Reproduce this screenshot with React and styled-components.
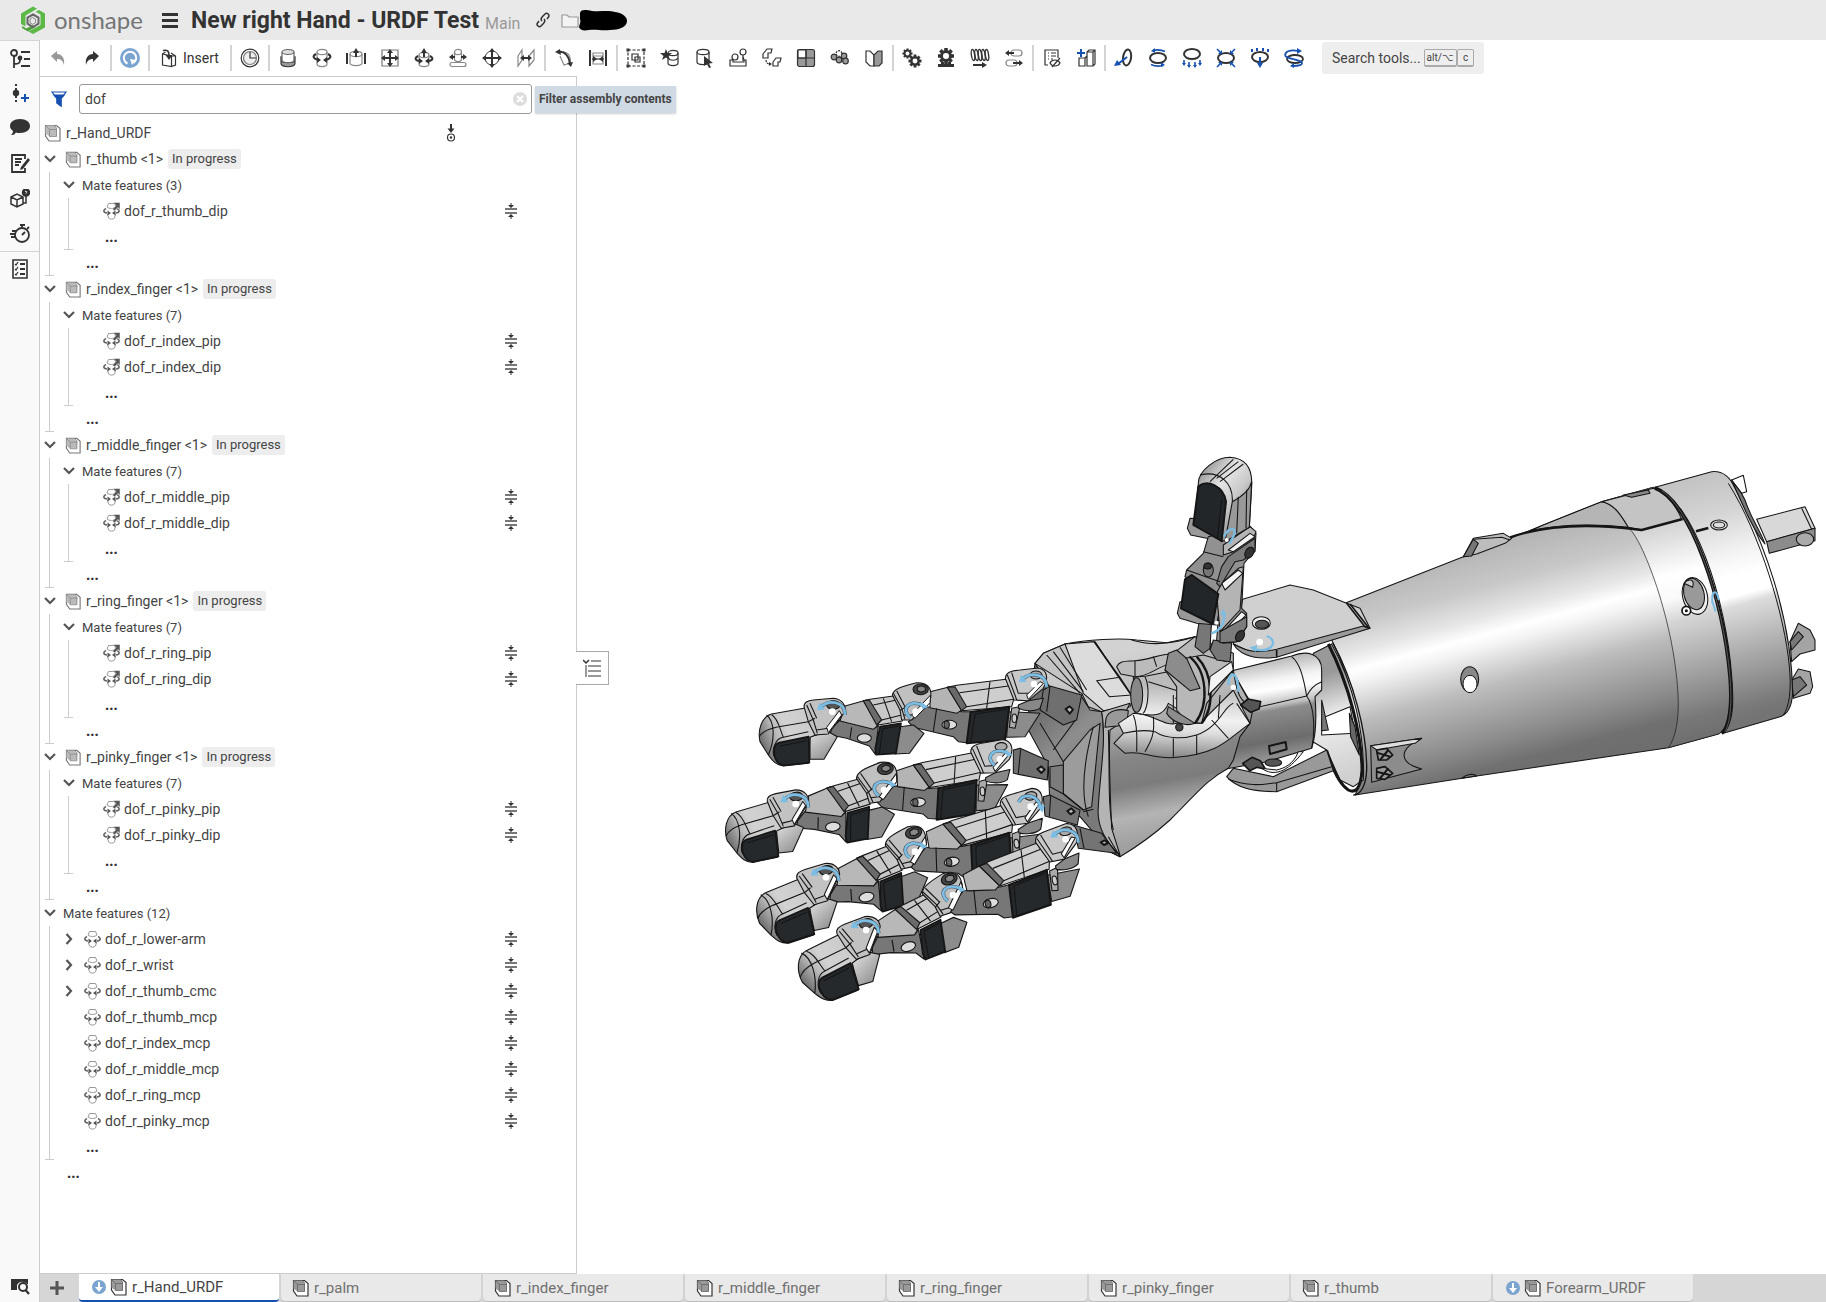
import React from "react";
import styled, { createGlobalStyle, css } from "styled-components";

const INK = "#333";
const BLUE = "#1651b0";
const SOFT = "#7ba4d0";

const GlobalStyle = createGlobalStyle`
  * { box-sizing: border-box; }
  html, body, #root { height: 100%; }
  body { margin: 0; background: #fff; }
  body, button, input { font-family: Roboto, "Liberation Sans", sans-serif; color: #444; }
  button { border: 0; padding: 0; background: none; cursor: pointer; }
  svg { display: block; flex: none; }
`;

/* ---------- layout ---------- */

const Shell = styled.div`
  display: flex;
  flex-direction: column;
  height: 100%;
  overflow: hidden;
`;

const Header = styled.header`
  display: flex;
  align-items: center;
  height: 40px;
  flex: none;
  padding-left: 20px;
  background: #e9e9e9;
`;

const Brand = styled.a`
  display: flex;
  align-items: center;
  gap: 8px;
  width: 142px;
  color: #757575;
  font: 400 24px/26px Lato, sans-serif;
  text-decoration: none;
`;

const MenuButton = styled.button`
  display: grid;
  width: 16px;
  margin-right: 13px;
  gap: 3px;
  span { height: 3px; background: ${INK}; }
`;

const Title = styled.h1`
  margin: 0 6px 0 0;
  padding-top: 2px;
  font-size: 23px;
  line-height: 28px;
  font-weight: 700;
  color: ${INK};
`;

const Branch = styled.span`
  padding-top: 6px;
  margin-right: 16px;
  font-size: 16px;
  color: #999;
`;

const HeaderIcon = styled.button`
  margin-right: ${(p) => p.$gap || 0}px;
`;

const Body = styled.div`
  display: flex;
  flex: 1;
  min-height: 0;
`;

const Rail = styled.nav`
  display: flex;
  flex-direction: column;
  align-items: center;
  width: 40px;
  flex: none;
  background: #f9f9f9;
  border-top: 1px solid #d4d4d4;
  border-right: 1px solid #ccc;
`;

const RailButton = styled.button`
  display: grid;
  place-items: center;
  width: 100%;
  height: 35px;
  ${(p) => p.$ruled && css`border-top: 1px solid #d4d4d4;`}
`;

const RailSpace = styled.div`
  flex: 1;
`;

const Column = styled.div`
  display: flex;
  flex-direction: column;
  flex: 1;
  min-width: 0;
`;

const Toolbar = styled.div`
  display: flex;
  align-items: center;
  height: 36px;
  flex: none;
  padding-left: 1px;
`;

const Tool = styled.button`
  display: flex;
  align-items: center;
  justify-content: center;
  gap: 4px;
  width: ${(p) => (p.$wide ? 78 : 34)}px;
  height: 34px;
  padding-right: ${(p) => (p.$wide ? 2 : 0)}px;
  font-size: 14px;
  color: ${INK};
`;

const Divider = styled.span`
  width: 2px;
  height: 26px;
  margin: 0 1px;
  background: #d4d4d4;
`;

const SearchTools = styled.button`
  display: flex;
  align-items: center;
  height: 32px;
  margin-left: 11px;
  padding: 0 10px;
  border-radius: 3px;
  background: #eee;
  font-size: 14px;
  color: #444;
  span { margin-right: 3px; }
`;

const Key = styled.kbd`
  height: 18px;
  padding: 0 ${(p) => p.$pad}px;
  border: 1px solid #aaa;
  border-bottom-width: 2px;
  border-radius: 2px;
  font: 10px/15px Roboto, sans-serif;
`;

const Work = styled.main`
  position: relative;
  display: flex;
  flex: 1;
  min-height: 0;
`;

const Panel = styled.section`
  width: 537px;
  flex: none;
  border: solid #ccc;
  border-width: 1px 1px 1px 0;
`;

const FilterRow = styled.form`
  display: flex;
  align-items: center;
  gap: 12px;
  height: 43px;
  padding: 0 44px 0 11px;
`;

const FilterField = styled.div`
  display: flex;
  align-items: center;
  flex: 1;
  height: 30px;
  padding: 0 4px 0 5px;
  border: 1px solid #999;
  border-radius: 3px;
`;

const FilterInput = styled.input`
  flex: 1;
  min-width: 0;
  padding: 0;
  border: 0;
  outline: 0;
  font-size: 14px;
  color: #444;
`;

const Tooltip = styled.div`
  position: absolute;
  left: 495px;
  top: 10px;
  height: 27px;
  padding: 0 4px;
  background: #d0dae5;
  box-shadow: 0 1px 2px rgba(0, 0, 0, 0.2);
  font-size: 12px;
  font-weight: 700;
  line-height: 26px;
`;

const Branches = styled.ul`
  list-style: none;
  margin: 0;
  padding: 0;
  ${(p) => p.$guided && css`
    position: relative;
    margin-left: 9px;
    padding-left: 9px;
    border-left: 1px solid #ccc;
    &::after {
      content: "";
      position: absolute;
      left: -5px;
      bottom: 0;
      width: 9px;
      height: 1px;
      background: #ccc;
    }
  `}
`;

const Row = styled.div`
  display: flex;
  align-items: center;
  height: 26px;
  padding: 0 59px 0 4px;
  font-size: ${(p) => (p.$folder ? 13 : 14)}px;
  white-space: nowrap;
`;

const RootRow = styled(Row)`
  gap: 4px;
  padding-right: 120px;
  & > :last-child { margin-left: auto; }
`;

const Chevron = styled.button`
  display: grid;
  place-items: center;
  width: 12px;
  height: 20px;
`;

const NodeBody = styled.span`
  display: flex;
  align-items: center;
  flex: 1;
  gap: 4px;
  margin-left: ${(p) => p.$inset}px;
`;

const Status = styled.span`
  height: 20px;
  margin-left: 1px;
  padding: 0 4px;
  border-radius: 3px;
  background: #ededed;
  font-size: 13px;
  line-height: 20px;
`;

const More = styled.button`
  height: 26px;
  margin-left: 23px;
  font-size: 14px;
  font-weight: 900;
  color: #333;
`;

const Viewport = styled.div`
  flex: 1;
  min-width: 0;
  svg { width: 100%; height: 100%; }
`;

const PanelToggle = styled.button`
  position: absolute;
  left: 536px;
  top: 48%;
  display: grid;
  place-items: center;
  width: 33px;
  height: 34px;
  border: 1px solid #aaa;
  border-left: 0;
  background: #fff;
`;

const TabBar = styled.nav`
  display: flex;
  height: 28px;
  flex: none;
  gap: 2px;
  background: #d6d6d6;
`;

const AddTab = styled.button`
  display: grid;
  place-items: center;
  width: 37px;
  padding-right: 4px;
`;

const Tab = styled.button`
  display: flex;
  align-items: center;
  gap: 4px;
  width: 200px;
  height: 27px;
  padding: 0 0 0 ${(p) => (p.$synced ? 13 : 11)}px;
  border-radius: 0 0 4px 4px;
  background: #e9e9e9;
  box-shadow: 0 1px 1px #bbb;
  font-size: 15px;
  color: #707070;
  ${(p) => p.$active && css`
    height: 28px;
    background: #fff;
    color: #444;
    border-bottom: 2px solid ${BLUE};
    box-shadow: none;
  `}
`;

/* ---------- small icons ---------- */

const Ico = ({ s = 20, w = s, box = "0 0 20 20", children, ...rest }) => (
  <svg width={w} height={s} viewBox={box} fill="none" stroke={INK} strokeWidth="1.2" aria-hidden="true" {...rest}>
    {children}
  </svg>
);

const Cyl = ({ x = 5, y = 2, w = 10, h = 16, c = "#888" }) => (
  <g stroke={c}>
    <ellipse cx={x + w / 2} cy={y + 3} rx={w / 2} ry="2.6" fill="#fff" />
    <path d={`M${x} ${y + 3}V${y + h - 3}c0 3.4 ${w} 3.4 ${w} 0V${y + 3}`} />
  </g>
);

const Ring = ({ d = 0 }) => <ellipse cx="10" cy={10 + d} rx="8" ry="5" stroke={INK} strokeWidth="2" />;

const gear = (cx, cy, r) => (
  <g stroke="none" fill={INK}>
    {[0, 45, 90, 135].map((a) => (
      <rect key={a} x={cx - r * 0.22} y={cy - r} width={r * 0.44} height={r * 2} transform={`rotate(${a} ${cx} ${cy})`} />
    ))}
    <circle cx={cx} cy={cy} r={r * 0.74} />
    <circle cx={cx} cy={cy} r={r * 0.38} fill="#fff" />
  </g>
);

const F = { fill: INK, stroke: "none" };
const B = { fill: BLUE, stroke: "none" };

const TOOLS = [
  ["Undo", <path fill="#999" stroke="none" d="M3 8l6-5v3c5 0 8 4 7 11-1-4-3-6-7-6v3z" />],
  ["Redo", <path {...F} d="M17 8l-6-5v3C6 6 3 10 4 17c1-4 3-6 7-6v3z" />],
  null,
  ["Update", <g stroke="none"><circle cx="10" cy="10" r="10" fill={SOFT} /><path d="M7.500 15.500A6.200 6.200 0 1 1 13.500 15" stroke="#fff" strokeWidth="2" fill="none" /><path d="M10 11l6 1-4 5z" fill="#fff" /></g>],
  null,
  ["Insert", <g><path d="M3.500 6v11l9 1.500V8zM12.500 8h4v9l-4 1.500M3.500 6l3-2M12 5l4.500 3" /><path d="M4 2.500c5-1 6 1 6 5" strokeWidth="1.600" /><path {...F} d="M6.500 7h7L10 12z" /></g>],
  null,
  ["History", <g><circle cx="10" cy="10" r="8.800" /><circle cx="10" cy="10" r="6.500" fill="#eee" stroke="#777" /><path d="M10 4v6h6" /></g>],
  null,
  ["Fastened mate", <g><path fill="#999" d="M3 9v6c0 5 14 5 14 0V9l-2 1v4H5v-4z" /><path d="M4 4v8c0 3.500 12 3.500 12 0V4" fill="#fff" stroke="#666" /><ellipse cx="10" cy="4" rx="6" ry="2.500" fill="#ddd" stroke="#666" /></g>],
  ["Revolute mate", <g><Cyl y={1} h={18} /><path d="M4 6c-4 2-3 5 3 6M16 6c4 2 3 5-3 6" strokeWidth="2" /><path {...F} d="M9 12l-4-3v6zM11 12l4-3v6z" /></g>],
  ["Slider mate", <g><Cyl x={4} w={12} y={3} h={15} /><path d="M1 5v11M19 5v11M10 9V3" strokeWidth="2" /><path {...F} d="M10 0L7 5h6z" /></g>],
  ["Planar mate", <g><path d="M2 2h16v16H2z" stroke="#777" /><path d="M10 3v14M3 10h14" strokeWidth="2" /><path {...F} d="M10 1l-3 4h6zM10 19l-3-4h6zM1 10l4-3v6zM19 10l-4-3v6z" /></g>],
  ["Cylindrical mate", <g><Cyl y={4} h={15} /><path d="M4 8c-4 2-3 5 3 5M16 8c4 2 3 5-3 5M10 9V4" strokeWidth="2" /><path {...F} d="M9 13l-4-3v6zM11 13l4-3v6zM10 0L7 5h6z" /></g>],
  ["Pin slot mate", <g><Cyl x={6.500} w={7} y={1} h={13} /><rect x="2" y="14.500" width="16" height="4" rx="2" stroke="#888" fill="#fff" /><path d="M4 9h3M16 9h-3" strokeWidth="2" /><path {...F} d="M1 9l4-3v6zM19 9l-4-3v6z" /></g>],
  ["Ball mate", <g><circle cx="10" cy="10" r="7" stroke="#777" /><path d="M10 1v18M1 10h18" strokeWidth="2" /><path {...F} d="M10 0L7 4h6zM10 20l-3-4h6zM0 10l4-3v6zM20 10l-4-3v6z" /></g>],
  ["Parallel mate", <g><path d="M2 8l4-6v10l-4 6zM13 8l5-6v10l-5 6z" stroke="#888" /><path d="M6 10h8" strokeWidth="2" /><path {...F} d="M4 10l4-3v6zM16 10l-4-3v6z" /></g>],
  null,
  ["Tangent mate", <g><path d="M6 8l4 9 6-2c1-6-1-11-7-11" stroke="#888" /><path d="M4 4c7-1 11 4 12 12" strokeWidth="2" /><path {...F} d="M1 4l5-3 1 6zM17 19l-4-4 6-1z" /></g>],
  ["Width mate", <g><path d="M2 2v16M18 2v16" strokeWidth="2" /><path d="M5 5h10v11H5zM5 8h10" stroke="#888" /><path d="M4 11h12" /><path {...F} d="M9 11l-4-3v6zM11 11l4-3v6z" /></g>],
  null,
  ["Group", <g><path d="M2 2h16v16H2z" strokeDasharray="3 1.500" /><path d="M6 6h6v6H6zM9 9h5v5H9z" /><path {...F} d="M.500.500h3v3h-3zM16.500.500h3v3h-3zM.500 16.500h3v3h-3zM16.500 16.500h3v3h-3z" /></g>],
  ["Mate connector", <g><Cyl x={8} w={10} y={2} c={INK} /><path d="M8 10c2 3 8 3 10 0" /><path {...F} d="M6 1l1.500 4H12l-3.500 3L10 12l-4-2.500L2 12l1.500-4L0 5h4.500z" /></g>],
  ["Replicate", <g><Cyl x={3} w={12} y={1} c={INK} /><path {...F} d="M10 8l9 7-4 .500 2 4-2 .500-2-4-3 2z" /></g>],
  ["Assembly pattern", <g><path d="M2 12h3v2h11v-2h2v6H2zM4 12l1-3M16 12l-1-3" /><circle cx="7" cy="9" r="3" fill="#fff" /><circle cx="15" cy="4" r="3" fill="#fff" /><path d="M15 7v6" /></g>],
  ["Linear pattern", <g><path d="M1 6l4-5h5l-1 4H6v5H1zM11 14l3-4h5l-1 4h-2v4h-5z" /><path d="M4 12c0 3 2 4 4 4" strokeDasharray="2 1" /><path {...F} d="M10 16l-3-2v4z" /></g>],
  ["Circular pattern", <g><rect x="1.500" y="1.500" width="17" height="17" rx="2" fill="#999" /><path d="M2 2h8v8H2z" fill="#fff" /><path d="M10 2v16M2 10h16" /></g>],
  ["Mirror", <g fill="#999"><circle cx="4" cy="9" r="2.800" /><circle cx="9" cy="12" r="2.800" /><circle cx="14" cy="8" r="2.800" /><circle cx="15.500" cy="13" r="2.800" /><circle cx="9" cy="5.500" r="2.800" fill="#fff" strokeDasharray="2 1" /></g>],
  ["Section", <g><path d="M2 3h4l4 4v11H6l-4-4z" /><path d="M18 3h-4l-4 4v11h5l3-3z" fill="#999" /></g>],
  null,
  ["Gear relation", <g>{gear(5.5, 5.5, 5)}{gear(13, 13, 6.5)}</g>],
  ["Rack and pinion", <g>{gear(10, 8, 8)}<path {...F} d="M2 19v-3h3v-2h3v2h4v-2h3v2h3v3z" /></g>],
  ["Screw relation", <g>{[3, 6.5, 10, 13.5, 17].map((x) => <ellipse key={x} cx={x} cy="7" rx="1.600" ry="5.500" transform={`rotate(-8 ${x} 7)`} strokeWidth="1.400" />)}<path d="M3 17h10" strokeWidth="2" /><path {...F} d="M17 17l-5-3v6z" /></g>],
  ["Linear relation", <g><rect x="7" y="2" width="11" height="6" rx="3" stroke="#888" /><rect x="2" y="12" width="11" height="6" rx="3" stroke="#888" /><path d="M4 5h6M9 15h7" strokeWidth="2" /><path {...F} d="M1 5l4-3v6zM19 15l-4-3v6z" /></g>],
  null,
  ["Bill of materials", <g><path d="M6 17H3V2h13v8M6 5h1M9 5h5M6 8h1M9 8h5M6 11h1M9 11h2" /><path d="M8 15c2-4 8-4 10 0-2 4-8 4-10 0zM10 19l8-9" /></g>],
  ["Insert in-context", <g><path d="M3 18V10h6v8zM11 18V4l2-2h6v14l-2 2zM17 18V4h-6M17 4l2-2M9 10l2-2" /><path d="M5 1v8M1 5h8" stroke={BLUE} strokeWidth="2" /></g>],
  null,
  ["Section view", <g><ellipse cx="13" cy="9.500" rx="4" ry="8" strokeWidth="2" transform="rotate(8 13 10)" /><path d="M13 9l-9 7" stroke={BLUE} strokeWidth="2" /><path {...B} d="M0 18l3-6 4 5z" /></g>],
  ["Rotate explode", <g><Ring /><path d="M5 2.500c4-1 8-1 12 1M15 17.500c-4 1-8 1-12-1" stroke={BLUE} strokeWidth="1.600" /><path {...B} d="M3 3l4-3v5zM17 17l-4-3v5z" /></g>],
  ["Explode down", <g><Ring d={-4} /><path d="M2 12v4M7 14v4M13 14v4M18 12v4" stroke={BLUE} strokeWidth="1.600" /><path {...B} d="M0 15h4l-2 3zM5 17h4l-2 3zM11 17h4l-2 3zM16 15h4l-2 3z" /></g>],
  ["Explode radial", <g><Ring /><path d="M1 1l4 4M19 1l-4 4M1 19l4-4M19 19l-4-4" stroke={BLUE} strokeWidth="1.600" /><path {...B} d="M6 2v4H2zM14 2v4h4zM6 18v-4H2zM14 18v-4h4z" /></g>],
  ["Explode step", <g><Ring d={-1} /><path d="M2 1v3M7 0v3M13 0v3M18 1v3M10 9v7" stroke={BLUE} strokeWidth="2" /><path {...B} d="M7 15h6l-3 5z" /></g>],
  ["Animate", <g><ellipse cx="11" cy="11" rx="8" ry="4" strokeWidth="1.800" /><path d="M14 3C6 1 0 4 1.500 8c2 3 12 3 16 6 2 3-3 4-9 4" stroke={BLUE} strokeWidth="1.800" /><path {...B} d="M18 3l-5-3v6zM6 18l4-3v5z" /></g>],
];

const PartIcon = ({ s = 18, dim }) => (
  <Ico s={s} w={s} box="0 0 18 18" stroke={dim ? "#777" : INK}>
    <path d="M1.500 1.500h11l3.500 3v12.500H5l-3.500-5z" fill="#fff" />
    <path d="M1.500 1.500h9l2.500 3v8H5.500l-4-3z" fill={dim ? "#bbb" : "#999"} stroke="none" />
    <path d="M1.500 1.500l4 4h7.500M5.500 5.500v7h7V4l-2-2.500" stroke={dim ? "#888" : "#666"} strokeWidth=".8" />
  </Ico>
);

const MateIcon = ({ flag }) => (
  <Ico s={18} w={17} box="0 0 17 18" stroke="#999" strokeWidth="1">
    <path d="M4 5l1.500-3.500h6L13 5c-2 2-7 2-9 0zM4.500 12l1 4c1.500 1.500 4.500 1.500 6 0l1-4" fill="#fff" />
    <path d="M3 6.500C0 8 0 10.500 4 11M14 6.500c3 1.500 3 4-1 4.500" stroke="#666" strokeWidth="1.600" />
    <path d="M8 11L4.500 8.500v5zM9 11l3.500-2.500v5z" fill="#555" stroke="none" />
    {flag && <path d="M10 .500h7v7l-2-2-3.500 3.500-2-2 3.500-3.500z" fill="#555" stroke="#fff" strokeWidth=".5" />}
  </Ico>
);

const LimitIcon = () => (
  <Ico s={16} w={12} box="0 0 12 16" strokeWidth="2" stroke="#777">
    <path d="M0 6h12M0 10h12" />
    <path d="M6 0v3M6 13v3" stroke={INK} strokeWidth="1" />
    <path d="M3 2h6L6 5zM3 14h6l-3-3z" {...F} />
  </Ico>
);

const ChevronIcon = ({ open }) => (
  <Ico s={12} box="0 0 12 12" stroke="#555" strokeWidth="2.200">
    <path d={open ? "M1 3l5 5 5-5" : "M3.500 1L8 6l-4.500 5"} />
  </Ico>
);

const SyncIcon = () => (
  <Ico s={14} box="0 0 14 14" stroke="none">
    <circle cx="7" cy="7" r="7" fill={SOFT} />
    <path d="M6 2h2v5h3l-4 5-4-5h3z" fill="#fff" />
  </Ico>
);

const RAIL = [
  ["Features", <g strokeWidth="1.800"><circle cx="4" cy="4" r="3" /><path d="M4 7v12M4 15c5 0 6-1 6-4M11 3h9M14 10h6M11 17h9" /><circle cx="10" cy="9" r="1.500" fill={INK} /></g>],
  ["Add configuration", <g><path d="M6 0v20" strokeDasharray="2 2" strokeWidth="2" /><circle cx="6" cy="9" r="3.200" {...F} /><path d="M15 10v8M11 14h8" stroke={BLUE} strokeWidth="2" /></g>],
  ["Comments", <path {...F} d="M10 0c6 0 10 3 10 7s-4 7-10 7c-2 0-3 0-4-.500C4 16 3 16 1 16c1-1 2-2 2-4C1 10.500 0 9 0 7c0-4 4-7 10-7z" />],
  ["Notes", <g strokeWidth="1.800"><path d="M15 5V1H2v17h13v-4M5 5h7M5 8h6M5 11h4" /><path d="M18 4l-7 9-1 3 3-1 7-9z" fill={INK} stroke="none" /></g>],
  ["Part lookup", <g strokeWidth="1.500"><path d="M1 8l6-3 6 3v7l-6 3-6-3zM1 8l6 3 6-3M7 11v7M13 14h3V7" /><circle cx="16" cy="3.500" r="3.500" fill={INK} /><path d="M15 2.500c2-1 2 1 1 2" stroke="#fff" strokeWidth="1" /></g>],
  ["Timer", <g strokeWidth="1.800"><circle cx="12" cy="11" r="7" /><path d="M10 1h5M12 2v2M17 5l2-2M12 11l3-3M0 10h5M1 13h4M2 7h4" /></g>],
];

/* ---------- assembly tree ---------- */

const finger = (name, joints, count) => ({
  kind: "part",
  name,
  children: [{ kind: "folder", name: `Mate features (${count})`, children: joints.map((j) => ({ kind: "mate", name: j, flag: true })) }],
});

const TREE = [
  finger("r_thumb", ["dof_r_thumb_dip"], 3),
  finger("r_index_finger", ["dof_r_index_pip", "dof_r_index_dip"], 7),
  finger("r_middle_finger", ["dof_r_middle_pip", "dof_r_middle_dip"], 7),
  finger("r_ring_finger", ["dof_r_ring_pip", "dof_r_ring_dip"], 7),
  finger("r_pinky_finger", ["dof_r_pinky_pip", "dof_r_pinky_dip"], 7),
  {
    kind: "folder",
    name: "Mate features (12)",
    children: ["lower-arm", "wrist", "thumb_cmc", "thumb_mcp", "index_mcp", "middle_mcp", "ring_mcp", "pinky_mcp"].map((n, i) => ({
      kind: "mate", name: `dof_r_${n}`, expandable: i < 3,
    })),
  },
];

const MoreRow = () => (
  <li><Row><More aria-label="Show hidden items">...</More></Row></li>
);

const Node = ({ node }) => {
  const toggles = node.children || node.expandable;
  return (
    <li>
      <Row $folder={node.kind === "folder"}>
        {toggles ? (
          <Chevron aria-label={`Toggle ${node.name}`}><ChevronIcon open={!!node.children} /></Chevron>
        ) : (
          <Chevron as="span" />
        )}
        <NodeBody $inset={node.kind === "folder" ? 7 : 9}>
          {node.kind === "part" && <PartIcon s={17} dim />}
          {node.kind === "mate" && <MateIcon flag={node.flag} />}
          <span>{node.name}{node.kind === "part" && " <1>"}</span>
          {node.kind === "part" && <Status>In progress</Status>}
        </NodeBody>
        {node.kind === "mate" && <LimitIcon />}
      </Row>
      {node.children && (
        <Branches $guided>
          {node.children.map((c) => <Node key={c.name} node={c} />)}
          <MoreRow />
        </Branches>
      )}
    </li>
  );
};

/* ---------- robot hand model ---------- */

const P = ({ d, f = "none", w }) => <path d={d} fill={f} strokeWidth={w} />;

const Gradients = () => {
  const ramp = (id, v, stops) => (
    <linearGradient id={id} gradientUnits="userSpaceOnUse" x1={v[0]} y1={v[1]} x2={v[2]} y2={v[3]}>
      {stops.map(([o, c]) => <stop key={o} offset={o} stopColor={c} />)}
    </linearGradient>
  );
  return (
    <defs>
      {ramp("cone", [500, 250, 690, 950], [[0, "#b0b0b0"], [0.2, "#c8c8c8"], [0.32, "#e6e6e6"], [0.39, "#fff"], [0.44, "#f4f4f4"], [0.6, "#bdbdbd"], [0.82, "#8c8c8c"], [0.93, "#707070"], [1, "#6e6e6e"]])}
      {ramp("drum", [1150, 80, 1340, 780], [[0, "#c4c4c4"], [0.15, "#d4d4d4"], [0.33, "#f4f4f4"], [0.42, "#fff"], [0.5, "#fff"], [0.54, "#dcdcdc"], [0.7, "#b4b4b4"], [0.95, "#7a7a7a"], [1, "#747474"]])}
      {ramp("collar", [950, 180, 1130, 850], [[0, "#c4c4c4"], [0.15, "#e0e0e0"], [0.3, "#fff"], [0.4, "#fafafa"], [0.5, "#d4d4d4"], [0.7, "#a8a8a8"], [0.92, "#787878"], [1, "#707070"]])}
      {ramp("palm", [420, 620, 520, 1180], [[0, "#d2d2d2"], [0.35, "#b0b0b0"], [0.55, "#868686"], [0.7, "#7c7c7c"], [0.86, "#b4b4b4"], [1, "#a0a0a0"]])}
      {ramp("wrist", [740, 660, 790, 960], [[0, "#b8b8b8"], [0.2, "#f4f4f4"], [0.3, "#fff"], [0.45, "#c0c0c0"], [0.5, "#8c8c8c"], [0.8, "#6c6c6c"], [1, "#9a9a9a"]])}
      {ramp("tube", [480, 740, 470, 950], [[0, "#bbb"], [0.45, "#f2f2f2"], [0.65, "#ddd"], [1, "#8a8a8a"]])}
      {ramp("front", [60, 800, 240, 1000], [[0, "#6c6c6c"], [0.5, "#8e8e8e"], [1, "#7a7a7a"]])}
      {ramp("inside", [920, 700, 1010, 1000], [[0, "#999"], [0.4, "#eee"], [1, "#d0d0d0"]])}
      {ramp("cap", [180, 300, 340, 230], [[0, "#6e6e6e"], [0.3, "#bbb"], [0.5, "#d2d2d2"], [1, "#cacaca"]])}
      {ramp("fin", [340, 280, 390, 360], [[0, "#d8d8d8"], [1, "#8c8c8c"]])}
      {ramp("thumbcap", [540, 80, 700, 200], [[0, "#8c8c8c"], [0.4, "#e4e4e4"], [0.7, "#c8c8c8"], [1, "#8a8a8a"]])}
    </defs>
  );
};

const Forearm = () => (
  <g transform="translate(1330 450) scale(.333333)">
    <P f="#d8d8d8" d="M1280 208L1425 170 1455 235 1310 275z" />
    <P f="#fff" d="M1205 90L1240 76 1250 125 1235 130z" />
    <P f="#8c8c8c" d="M1310 275L1455 235 1455 272 1318 310z" />
    <P d="M1415 175L1445 238" />
    <ellipse cx="1425" cy="268" rx="26" ry="20" fill="#aaa" />
    <P f="#a4a4a4" d="M1380 575L1405 520 1440 540 1455 570V600L1410 612 1385 635zM1385 690L1405 657 1440 665 1448 710 1440 730 1390 745z" />
    <P f="#777" d="M1380 575L1405 545 1420 560 1385 600zM1385 690L1410 680 1430 705 1390 740z" />
    <P f="url(#cone)" d="M45 460L400 320 540 265 815 155 970 112C1060 150 1200 450 1210 740 1208 800 1190 840 1165 852L1015 893 440 978 75 1035C120 960 80 720 5 570L45 545z" />
    <P f="url(#collar)" d="M815 155L970 112C1080 150 1195 450 1205 740 1205 800 1190 840 1165 852L1015 893C1040 860 1045 800 1045 760 1040 520 930 250 895 235 870 190 850 160 815 155z" w="2" />
    <P f="url(#drum)" d="M975 112L1145 65C1180 62 1200 80 1215 115 1300 270 1385 500 1388 730 1385 780 1365 798 1345 802L1180 850C1210 820 1212 760 1205 680 1190 450 1090 150 975 112z" />
    <P f="#b5b5b5" d="M640 225L815 155C850 160 875 195 895 232 800 222 700 220 600 243z" />
    <P f="#c4c4c4" d="M815 155L970 115C1010 130 1040 170 1055 208L935 240 895 232C870 190 850 160 815 155z" />
    <P w="7" d="M540 262C660 220 800 222 935 240L1058 207" />
    <P w="11" d="M975 114C1080 150 1180 450 1200 680 1207 760 1200 830 1175 850" />
    <path d="M995 122C1085 180 1180 450 1200 680 1207 760 1200 820 1185 845" fill="none" stroke="#777" strokeWidth="2" />
    <P w="3" d="M1195 100C1290 250 1365 500 1378 650 1385 720 1378 770 1360 795" />
    <P f="#777" d="M1205 90C1215 110 1230 115 1245 150 1265 210 1285 230 1305 282 1270 240 1240 170 1205 90z" />
    <P f="#888" d="M880 135L955 120 960 130 905 142z" />
    <P f="#bdbdbd" d="M400 320L430 265 520 250 545 265 525 280 440 312z" />
    <P f="#777" d="M400 320L430 268 445 280 425 318z" />
    <P d="M430 268L515 262 540 270" />
    <ellipse cx="1167" cy="225" rx="25" ry="15" /><ellipse cx="1167" cy="225" rx="17" ry="9" />
    <P w="8" d="M1098 244L1135 234" />
    <ellipse cx="1095" cy="438" rx="37" ry="56" fill="#eee" transform="rotate(-14 1095 438)" />
    <ellipse cx="1092" cy="432" rx="30" ry="48" fill="#999" transform="rotate(-14 1092 432)" />
    <P f="#ccc" d="M1062 400C1075 385 1095 385 1088 412z" />
    <circle cx="1069" cy="482" r="13" fill="#fff" strokeWidth="5" /><circle cx="1069" cy="482" r="3" fill="#222" />
    <path d="M1147 460C1143 415 1163 420 1166 450M1147 455L1157 485" stroke="#7cbde4" strokeWidth="6" fill="none" />
    <ellipse cx="419" cy="688" rx="27" ry="38" fill="#888" /><ellipse cx="420" cy="702" rx="21" ry="26" fill="#fff" strokeWidth="3" />
    <P f="#8c8c8c" d="M122 887L275 865C200 900 210 940 275 957L125 997z" />
    <P f="#ddd" d="M122 887L275 865 255 880 140 900z" />
    <P w="5" f="#999" d="M140 900L170 895 188 915 170 930 145 930zM140 955L165 950 188 970 165 988 140 985z" />
    <P w="6" d="M140 908L180 920M150 930L175 900M140 965L180 975M150 985L175 955" />
    <P f="#777" d="M395 985C410 972 430 970 440 978z" />
  </g>
);

const Hand = () => (
  <g transform="translate(1020 440) scale(.333333)">
    {/* open end of the forearm */}
    <P f="url(#inside)" d="M880 640L935 612C1000 730 1035 880 1030 1020L1000 1040 960 1020 920 930 870 900z" />
    <P f="#fff" d="M905 835L990 800 1005 880 905 885z" />
    <P f="#666" d="M988 820L1005 860 1018 945 992 890z" />
    <P w="9" d="M925 612C985 730 1025 880 1026 990 1022 1050 1005 1060 985 1050 955 1030 935 980 920 932" />
    <P w="4" d="M938 608C1000 720 1042 880 1040 990 1038 1040 1020 1065 1000 1065" />
    <P f="#777" d="M905 780L925 870 905 872z" />
    <P f="#999" d="M620 1010L640 985 760 1010 920 930 940 992 770 1055C700 1055 650 1045 620 1010z" />
    <P d="M625 1018C700 1045 740 1030 770 1028L935 980M770 1028V1055" />
    {/* wrist and palm shell */}
    <P f="url(#wrist)" d="M560 720L645 690 815 648C860 630 905 640 905 690V750L885 770C890 830 890 880 875 925L740 965 600 990z" />
    <P d="M700 805L860 768C850 710 840 670 815 650M860 768C885 800 885 880 875 925M860 768C870 750 880 735 905 725" />
    <P f="url(#palm)" d="M45 670L70 640 135 612C200 598 300 594 350 600L440 608 525 590 600 660 640 700 700 800 690 850 660 890 640 960 625 985C560 1020 540 1050 450 1140 400 1185 360 1215 300 1250L270 1235 240 1180 230 850 100 760z" />
    <P f="#c4c4c4" d="M45 670L70 640 135 612 225 605 335 770 325 800 245 815 205 800 185 760z" />
    <P f="#dcdcdc" d="M135 612L222 605 340 775 330 800 250 812 190 760z" />
    <P d="M80 645L180 760M100 635L190 755M120 622L200 750M230 722L300 712 335 765 268 770zM222 605L300 712" />
    <P f="url(#front)" d="M45 670L100 760 185 770 210 810 245 815C260 900 240 1000 265 1150L300 1250 270 1235 180 1130 90 1100 85 980 20 860z" />
    <P f="#9c9c9c" d="M210 870L240 850 225 1000 215 1100 190 1110 130 1060V965z" />
    <P f="#b4b4b4" d="M245 815L330 790 300 850 270 870C265 950 270 1050 275 1165L300 1245C250 1200 230 1150 235 1100 240 1000 260 900 245 815z" />
    <P f="#7c7c7c" d="M90 980L130 975V1062L90 1040z" />
    <P d="M220 860C190 970 180 1060 205 1130M60 850L130 965M190 1115L220 1108M300 1250L265 1190M100 930L170 835M130 1062L190 1110" />
    <P f="#6f6f6f" d="M70 750L90 738 185 765 170 840 130 855 60 810z" />
    <P f="#6f6f6f" d="M-20 930L0 925 85 962 82 1020 -20 1000z" />
    <P f="#747474" d="M70 1070L90 1065 180 1110 172 1155 75 1128z" />
    <P f="#747474" d="M160 1155L245 1180 290 1240 175 1225z" />
    <P d="M90 740L80 815M2 928L-5 1000M92 1068L88 1130M180 1165L192 1225" />
    <P f="#bbb" w="6" d="M137 807l12-8 10 10-10 12zM52 987l12-8 10 10-10 10zM142 1113l12-8 10 10-12 8zM242 1207l12-6 10 8-12 6z" />
    <P f="#999" d="M258 835C265 810 300 805 325 812L320 855 255 862z" />
    <P d="M265 870C270 1000 262 1100 280 1170M335 600C400 620 460 610 525 590" />
    {/* flexible tubing */}
    <P f="url(#tube)" d="M290 680C300 660 320 665 345 662 390 660 420 640 460 642L450 672C410 680 390 710 345 710L302 702z" />
    <P d="M345 662V708M400 650L410 680" />
    <P f="url(#tube)" d="M282 910L310 880 295 850 340 820C400 820 430 860 470 850L540 850 640 750 690 850C620 900 600 940 470 952 400 960 370 930 315 940z" />
    <P d="M310 880C350 870 380 870 405 875 440 900 500 895 530 885 600 860 610 800 640 790M340 825C355 860 350 900 350 935M400 830C405 880 395 900 375 935M460 895V950M530 885V945M575 840L625 895M650 790L690 850" />
    <P f="url(#tube)" d="M340 712L380 708 470 690 560 730 545 850 445 790C430 830 400 830 345 818z" />
    <ellipse cx="350" cy="765" rx="18" ry="52" fill="#888" />
    <P d="M375 710C390 740 385 800 370 820M385 725L530 770M460 765V850M465 775H530" />
    {/* thumb base */}
    <P f="#b8b8b8" d="M460 640L525 590 640 640 640 690 560 790 545 850 500 845 470 810V740L435 690z" />
    <P f="#8c8c8c" d="M445 640L470 630 500 655 540 745 510 752 435 690z" />
    <P f="#8c8c8c" d="M445 800L525 850C500 860 460 850 440 820z" />
    <P w="7" d="M508 650C560 690 570 790 525 850M530 650C580 700 585 800 545 850" />
    <P f="#f2f2f2" d="M570 710L635 665 640 690 565 765z" />
    <P d="M600 765L595 835M640 690C650 760 660 790 700 800M650 715L690 790M495 655L550 645 620 665" />
    <circle cx="478" cy="862" r="11" fill="#444" />
    <P f="#555" w="5" d="M662 795l22-18 38 8-5 22-25 10zM668 970l28-18 25 10 15 25-25-5-22 10z" />
    <P d="M747 918l50-12 3 22-50 14z" w="6" />
    <ellipse cx="760" cy="968" rx="25" ry="11" fill="#555" />
    <P f="#eee" w="3" d="M725 985C760 1010 800 1000 850 935L835 935C820 975 790 985 770 990z" />
    {/* top plate */}
    <P f="#d0d0d0" d="M668 478L810 435 880 450 980 490 1020 505 1050 565 770 640 700 640 640 612z" />
    <P f="#9a9a9a" d="M640 612C690 640 720 638 770 628L1030 558 1050 565 770 652C700 660 660 645 640 612z" />
    <P w="5" d="M980 490L1035 560 1050 565M990 492L1045 562M770 630V652" />
    <ellipse cx="724" cy="549" rx="27" ry="19" fill="#eee" /><ellipse cx="726" cy="553" rx="20" ry="12" fill="#555" />
    {/* thumb links */}
    <P f="#777" d="M540 530L575 540 570 625 550 640 525 620zM580 600L635 610 630 665 590 660 570 630z" />
    <P f="#999" d="M480 485L472 520 480 535 530 550 590 555 600 500zM510 235L502 265 512 285 560 295 600 300 610 240z" />
    <P f="#919191" d="M565 290L550 340 500 390 495 410 600 470 590 600 610 610 650 605 680 560V520L665 505 672 370 705 330 708 280 690 258z" />
    <P f="#b4b4b4" d="M605 430L655 385 670 380 660 510 600 575 590 460zM610 315L690 260 708 275 700 295 640 335 610 345z" />
    <P f="#f4f4f4" d="M605 430L655 390 668 400 615 450zM625 330L690 280 705 290 640 335zM610 575L665 515 678 525 615 590z" />
    <P f="#7c7c7c" d="M625 350L705 295 705 335 670 360 645 365 600 440 590 430 605 380zM600 575L680 530V560L650 605 600 608z" />
    <ellipse cx="565" cy="390" rx="15" ry="21" fill="#777" /><ellipse cx="563" cy="378" rx="11" ry="9" fill="#333" />
    <ellipse cx="688" cy="338" rx="12" ry="18" fill="#333" transform="rotate(30 688 338)" />
    <ellipse cx="660" cy="588" rx="12" ry="18" fill="#333" transform="rotate(30 660 588)" />
    <P d="M550 335L610 350M500 390L600 425" />
    <P f="#222629" w="6" d="M495 418L515 405 595 462 578 552 483 505z" />
    <P f="url(#thumbcap)" d="M535 130C535 90 590 52 630 52 680 55 698 90 695 140L688 262 605 305 525 240z" />
    <P f="#999" d="M637 185C665 170 690 150 695 125L688 262 615 305z" />
    <P d="M540 105C600 90 640 130 637 185M570 125L640 58M590 115L655 65M600 125L670 72M655 170L650 280M680 150L678 265" />
    <P f="#222629" w="6" d="M535 140C560 115 612 140 618 185L605 303 520 255z" />
    <P d="M605 180L592 295" />
  </g>
);

const TipLink = () => (
  <>
    <P f="url(#fin)" d="M330 290L385 275 412 290 372 358 330 358z" />
    <P f="url(#cap)" d="M215 222L320 203 335 235 355 282 330 292 325 370 250 378C225 375 215 358 205 345L180 305C172 270 185 230 215 222z" />
    <P d="M215 224C235 235 240 270 250 292L325 275M178 290C190 270 215 265 228 262L325 245M250 292C225 295 215 330 222 350M200 225C225 245 225 300 205 345" />
    <P f="#25292c" w="5" d="M238 308L326 290 328 368 250 376C228 372 222 350 222 330 224 315 230 310 238 308z" />
    <P d="M240 318L320 302" />
    <P f="#c2c2c2" d="M312 200C312 185 325 182 340 180L400 175C430 178 438 200 435 215L385 282 345 285 325 245z" />
    <P d="M320 195L340 240 352 280M330 190L350 235M325 245L345 235M350 270L385 265" />
    <P f="#fff" w="3" d="M425 225L385 278 380 262 418 212z" />
    <ellipse cx="400" cy="195" rx="20" ry="13" fill="#555" />
  </>
);

const MidLink = () => (
  <>
    <P f="url(#fin)" d="M600 260L640 255 672 280 628 340 585 342z" />
    <P f="#777" d="M395 265L420 240 520 265 535 258 525 342 508 318 440 295 390 285z" />
    <P f="#b8b8b8" d="M435 198L500 180 535 255 520 268 420 243z" />
    <P f="#c8c8c8" d="M490 182L510 178 580 168 612 215 607 243 535 255z" />
    <P f="#6a6a6a" d="M490 182L508 180 545 240 530 255z" />
    <P d="M520 195L590 180M545 240L605 225M550 175L575 245M455 262L450 295" />
    <P f="#25292c" w="5" d="M540 260L603 250 588 340 528 344 526 325z" />
    <P d="M548 266L598 258M548 266L538 342" />
    <P f="#c0c0c0" d="M577 165C580 148 600 140 650 128 690 128 698 150 690 185L635 240 605 240 600 210z" />
    <P d="M580 160L605 205 615 238M590 152L615 200M600 212L618 200M610 225H645" />
    <P f="#fff" w="3" d="M692 165L690 188 645 235 635 225z" />
    <ellipse cx="662" cy="148" rx="23" ry="16" fill="#444" />
    <path d="M652 142l12-5 12 5v10l-12 5-12-5z" fill="#888" />
    <ellipse cx="493" cy="294" rx="21" ry="13" fill="#ddd" />
  </>
);

const BaseLink = () => (
  <>
    <P f="url(#fin)" d="M925 215L1020 220 975 290 920 292z" />
    <P f="#777" d="M625 245L680 200 785 215 815 215 802 308 775 305 760 290 640 262z" />
    <P f="#b4b4b4" d="M690 155L750 140 788 208 770 220 690 203z" />
    <P f="#cecece" d="M742 142L770 136 918 118 942 175 935 200 785 212z" />
    <P f="#6a6a6a" d="M742 142L765 140 800 200 785 212z" />
    <P d="M778 158L925 138M800 200L940 178M870 125L860 205M710 205L700 275" />
    <P f="#25292c" w="6" d="M812 216L928 200 915 300 800 310z" />
    <P d="M825 222L922 208M825 222L812 308" />
    <P f="#aaa" d="M935 205L960 200 945 265 928 262z" />
    <ellipse cx="943" cy="235" rx="7" ry="13" fill="#ccc" />
    <P f="#888" d="M955 195L985 182 1030 175 1020 205C1000 218 970 212 955 205z" />
    <P f="#c8c8c8" d="M916 115C918 98 930 92 960 90L1015 84C1045 90 1045 120 1030 145L985 182 942 180z" />
    <P d="M922 105L945 165 950 180M935 98L955 160H990" />
    <P f="#fff" w="3" d="M1030 130L985 178 980 165 1020 125z" />
    <ellipse cx="1008" cy="105" rx="18" ry="12" fill="#aaa" />
    <ellipse cx="748" cy="254" rx="22" ry="13" fill="#ddd" /><ellipse cx="740" cy="254" rx="8" ry="11" fill="#666" />
  </>
);

// Joint positions run tip, middle; each link turns and stretches about its own joint.
const FINGERS = [
  { joints: [[395, 205], [645, 205]], turn: [0, 0, 0], reach: [1, 1, 1] },
  { joints: [[285, 480], [548, 445]], turn: [-6, -7, -4], reach: [1, 1.05, 1] },
  { joints: [[376, 702], [642, 634]], turn: [-12, -13, -10], reach: [1.04, 1.07, 1.03] },
  { joints: [[497, 862], [756, 766]], turn: [-16, -18, -14], reach: [1.06, 1.06, 1.04] },
];

const Finger = ({ joints: [tip, mid], turn, reach }) => (
  <g>
    <g transform={`translate(${mid}) rotate(${turn[2]}) scale(${reach[2]}) translate(-645 -205)`}><BaseLink /></g>
    <g transform={`translate(${tip}) rotate(${turn[1]}) scale(${reach[1]}) translate(-395 -205)`}><MidLink /></g>
    <g transform={`translate(${tip}) rotate(${turn[0]}) scale(${reach[0]}) translate(-395 -205)`}><TipLink /></g>
  </g>
);

const ARROWS = [
  [395, 205, "l"], [645, 205, "r"], [1000, 122, "l"],
  [285, 482, "l"], [550, 440, "r"], [898, 348, "r"],
  [376, 702, "l"], [643, 625, "r"], [990, 490, "d"],
  [496, 860, "l"], [757, 755, "r"], [1095, 588, "l"],
];

const ARROW_PATH = {
  l: ["M40 20C40-22-10-28-33-3", "M-44 5L-36-18-20 4z"],
  r: ["M-14 28C-44 5-20-28 22-10", "M40-4L18-20 22 2z"],
  d: ["M-34-4C-20-30 20-30 32 10", "M38 28L20 8 44 4z"],
};

const Arrow = ({ x, y, kind }) => (
  <g transform={`translate(${x} ${y})`}>
    <circle cx="2" cy="10" r="10" fill="#fff" stroke="none" />
    <path d={ARROW_PATH[kind][0]} fill="none" stroke="#46535b" strokeWidth="11" />
    <path d={ARROW_PATH[kind][0]} fill="none" stroke="#7cbde4" strokeWidth="8" />
    <path d={ARROW_PATH[kind][1]} fill="#7cbde4" stroke="none" />
  </g>
);

const Model = () => (
  <svg viewBox="577 76 1249 1198" role="img" aria-label="Robot hand and forearm assembly" fill="none" stroke="#151515" strokeWidth="3.200" strokeLinejoin="round">
    <Gradients />
    <Forearm />
    <Hand />
    <g transform="translate(700 640) scale(.333333)">
      {FINGERS.map((f, i) => <Finger key={i} {...f} />)}
      {ARROWS.map(([x, y, k]) => <Arrow key={`${x}-${y}`} x={x} y={y} kind={k} />)}
    </g>
    <g transform="translate(1020 440) scale(.333333)" fill="none" stroke="#7cbde4" strokeWidth="7">
      <circle cx="719" cy="606" r="10" fill="#fff" stroke="none" />
      <path d="M740 588C775 600 760 640 705 628M612 290C625 260 655 260 640 290L628 312M575 580C605 570 618 540 610 515M625 735C625 690 655 690 655 755" />
      <path d="M688 622l24-6-4 20zM600 525l10-18 10 18z" fill="#7cbde4" stroke="none" />
      <circle cx="620" cy="300" r="6" fill="#fff" stroke="none" /><circle cx="590" cy="548" r="6" fill="#fff" stroke="none" /><circle cx="640" cy="742" r="8" fill="#fff" stroke="none" />
    </g>
  </svg>
);

/* ---------- page ---------- */

const TABS = [
  { name: "r_Hand_URDF", sync: true, active: true },
  { name: "r_palm" }, { name: "r_index_finger" }, { name: "r_middle_finger" },
  { name: "r_ring_finger" }, { name: "r_pinky_finger" }, { name: "r_thumb" },
  { name: "Forearm_URDF", sync: true },
];

export default function App() {
  return (
    <Shell>
      <GlobalStyle />
      <Header>
        <Brand href="#home">
          <Ico s={28} w={26} box="0 0 26 28" stroke="none">
            <path d="M1 7.500L13 .500l4 2.300L5.500 9.500v11L1 18z" fill="#5cb947" />
            <path d="M19 4l6 3.500v14L13 28l-4.500-2.500L20.500 19V8.500L15.500 5.800z" fill="#5cb947" />
            <path d="M2 20l4.500 2.500 6-3.500 3 2-7.500 4.500L2 22z" fill="#4aa238" />
            <path d="M13 8.500l5.500 3v6.200L13 21l-5.500-3.300v-6.200z" stroke="#666" strokeWidth="2" />
            <path d="M12.500 11.500l3 1.700v3.500l-2.800 1.600-2.700-1.600v-3.500z" stroke="#888" strokeWidth="1" />
          </Ico>
          onshape
        </Brand>
        <MenuButton aria-label="Menu"><span /><span /><span /></MenuButton>
        <Title>New right Hand - URDF Test</Title>
        <Branch>Main</Branch>
        <HeaderIcon $gap={11} aria-label="Copy link">
          <Ico s={16} w={14} box="0 0 14 16" strokeWidth="1.500">
            <path d="M6 9c-2-2 0-4 1-5l2-2c2-2 5 1 3.500 3L11 7M8 7c2 2 0 4-1 5l-2 2c-2 2-5-1-3.500-3L3 9" />
          </Ico>
        </HeaderIcon>
        <HeaderIcon aria-label="Document folder">
          <Ico s={24} w={66} box="0 0 66 24" stroke="#999">
            <path d="M1 7h5l2 2h9v10H1z" fill="#f4f4f4" />
            <path d="M19 5c1-4 6-3 12-2 8 1 16-1 23 1 8 1 12 5 12 9 0 6-8 9-17 9-8 1-14-1-21 0-6 1-9 0-10-3 1-4 2-5 1-8z" fill="#000" stroke="none" />
          </Ico>
        </HeaderIcon>
      </Header>
      <Body>
        <Rail aria-label="Side panels">
          {RAIL.map(([label, art]) => (
            <RailButton key={label} aria-label={label}><Ico>{art}</Ico></RailButton>
          ))}
          <RailButton $ruled aria-label="Checklist">
            <Ico><path d="M3 1h14v18H3z" strokeWidth="1.600" /><path d="M10 5h5M10 10h5M10 15h5" strokeWidth="1.800" /><path d="M5 5l1 1 2-3M5 10l1 1 2-3M5 15l1 1 2-3" /></Ico>
          </RailButton>
          <RailSpace />
          <RailButton aria-label="Find in view">
            <Ico><path d="M1 4h17v5h-1a6 6 0 0 0-10 1v5H1z" {...F} /><circle cx="13" cy="12" r="4" strokeWidth="2" fill="#f9f9f9" /><path d="M15.500 15l3.500 4" strokeWidth="2.200" /></Ico>
          </RailButton>
        </Rail>
        <Column>
          <Toolbar role="toolbar" aria-label="Assembly tools">
            {TOOLS.map((t, i) =>
              t ? (
                <Tool key={t[0]} $wide={t[0] === "Insert"} aria-label={t[0]}>
                  <Ico>{t[1]}</Ico>
                  {t[0] === "Insert" && "Insert"}
                </Tool>
              ) : <Divider key={i} />
            )}
            <SearchTools><span>Search tools...</span><Key $pad={2}>alt/⌥</Key><Key $pad={5}>c</Key></SearchTools>
          </Toolbar>
          <Work>
            <Panel aria-label="Assembly contents">
              <FilterRow onSubmit={(e) => e.preventDefault()}>
                <Ico s={16} box="0 0 16 16" stroke={BLUE}>
                  <path d="M1 1h14L10 7.500V15l-4-3V7.500z" />
                  <path d="M3 4h10l-3 3.500V15l-4-3V7.500z" fill={BLUE} />
                </Ico>
                <FilterField>
                  <FilterInput aria-label="Filter assembly contents" defaultValue="dof" />
                  <button type="button" aria-label="Clear filter">
                    <Ico s={14} box="0 0 14 14" stroke="#fff" strokeWidth="2"><circle cx="7" cy="7" r="7" fill="#ddd" stroke="none" /><path d="M4 4l6 6M10 4l-6 6" /></Ico>
                  </button>
                </FilterField>
              </FilterRow>
              <RootRow>
                <PartIcon s={18} dim />
                <span>r_Hand_URDF</span>
                <Ico s={18} w={10} box="0 0 10 18"><path d="M5 0v6" strokeWidth="2" /><path d="M1.500 4.500h7L5 9z" {...F} /><circle cx="5" cy="13.500" r="3.500" /><circle cx="5" cy="13.500" r="1.200" {...F} /></Ico>
              </RootRow>
              <Branches>
                {TREE.map((n) => <Node key={n.name} node={n} />)}
                <MoreRow />
              </Branches>
            </Panel>
            <Viewport><Model /></Viewport>
            <PanelToggle aria-label="Toggle list">
              <Ico s={18} box="0 0 18 18" strokeWidth="1.200">
                <path d="M8 2h10M5 7h13M5 12h13M5 17h13" />
                <path d="M3 6v12" stroke="#999" strokeWidth="2" />
                <path d="M0 1l3 3 3-3" strokeWidth="1.500" />
              </Ico>
            </PanelToggle>
            <Tooltip role="tooltip">Filter assembly contents</Tooltip>
          </Work>
          <TabBar aria-label="Document tabs">
            <AddTab aria-label="Add tab"><Ico s={16} box="0 0 16 16" stroke="#555" strokeWidth="3"><path d="M8 1v14M1 8h14" /></Ico></AddTab>
            {TABS.map((t) => (
              <Tab key={t.name} $active={t.active} $synced={t.sync}>
                {t.sync && <SyncIcon />}
                <PartIcon s={18} />
                <span>{t.name}</span>
              </Tab>
            ))}
          </TabBar>
        </Column>
      </Body>
    </Shell>
  );
}
